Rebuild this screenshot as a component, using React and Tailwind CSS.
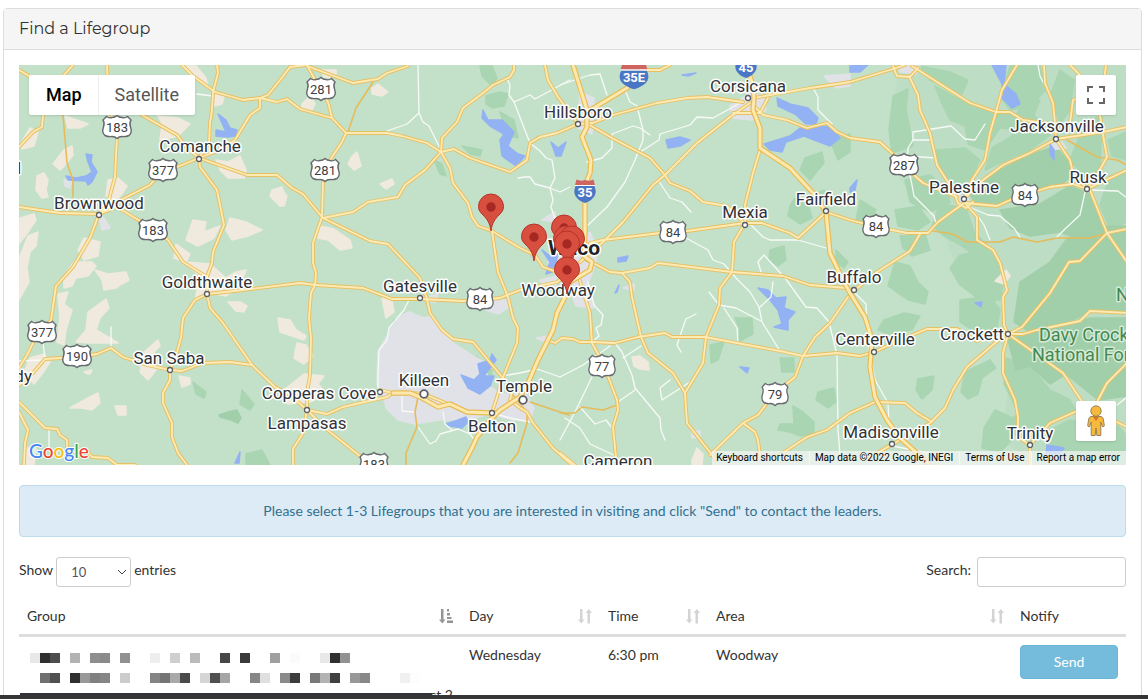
const FOREST_DARK = [
  "M1020 282 L1050 262 1066 240 1092 226 1127 226 1127 310 1090 312 1060 326 1030 332 1014 322Z",
  "M1008 340 L1040 330 1090 318 1127 318 1127 396 1098 400 1066 374 1050 384 1030 366 1016 370Z",
  "M1000 170 L1030 155 1056 146 1076 172 1060 186 1036 190 1020 200 1000 204 976 206 968 190Z",
  "M1040 204 L1070 186 1090 194 1102 228 1080 240 1060 232 1030 236 1010 228 1000 210Z",
  "M219 415 L228 412 237 410 241 418 238 423 231 420 220 417Z",
];

const FOREST = [
  "M893 96 L908 89 906 110 910 130 913 146 892 153 889 130Z",
  "M920 66 L950 72 968 80 962 94 930 80Z",
  "M935 86 L960 100 990 110 1020 114 1018 130 1000 128 985 150 968 144 965 126 950 120 942 104Z",
  "M1010 66 L1040 66 1046 90 1030 106 1010 110 1000 96Z",
  "M1022 95 L1040 100 1034 115 1050 135 1030 150 1000 163 985 170 992 148 1012 136Z",
  "M935 150 L965 148 980 160 970 180 955 186 940 168Z",
  "M905 180 L930 175 948 190 950 203 930 212 910 202Z",
  "M895 210 L918 206 930 222 918 230 898 226Z",
  "M860 200 L876 210 870 222 856 220Z",
  "M900 236 L925 234 930 250 912 256 903 248Z",
  "M940 204 L966 208 974 232 990 248 1000 262 980 260 962 246 944 236 932 226Z",
  "M960 255 L985 250 997 262 1003 285 1000 300 980 300 960 285 950 268Z",
  "M895 262 L910 266 918 282 928 292 925 304 908 300 888 286Z",
  "M884 320 L904 313 920 316 912 330 888 334 878 330Z",
  "M960 300 L990 296 1000 310 996 332 978 334 960 322Z",
  "M965 372 L990 360 996 368 982 378 978 394 968 399 961 392Z",
  "M918 379 L934 376 932 390 922 399 916 390Z",
  "M1006 358 L1030 366 1050 390 1070 400 1076 412 1050 424 1030 444 1006 430 1018 412 1004 384Z",
  "M995 410 L1018 420 1012 440 1000 452 982 448 984 428Z",
  "M1046 432 L1070 420 1118 426 1127 436 1127 465 1060 465Z",
  "M1060 70 L1074 80 1070 110 1060 124 1050 96Z",
  "M1090 120 L1102 116 1100 170 1090 182 1070 160 1078 140Z",
  "M1108 140 L1127 132 1127 160 1112 156Z",
  "M1110 176 L1127 172 1127 222 1110 230 1100 205Z",
  "M795 198 L808 204 812 218 800 224 788 216 790 206Z",
  "M810 196 L824 190 828 204 816 206Z",
  "M805 158 L822 152 824 163 810 180 800 170Z",
  "M830 140 L850 134 850 152 838 160Z",
  "M770 250 L784 246 786 260 778 266 769 260Z",
  "M735 318 L752 318 753 334 738 342 740 330Z",
  "M710 345 L724 342 718 360 711 363Z",
  "M780 358 L794 358 794 372 782 372Z",
  "M793 406 L803 412 814 422 814 434 800 436 790 432 778 430 780 424 794 424Z",
  "M818 392 L834 388 836 402 828 408 816 400Z",
  "M480 66 L492 66 497 78 492 86 482 76Z",
  "M486 96 L500 92 508 94 504 106 492 108 486 104Z",
  "M462 146 L482 150 480 156 470 154Z",
  "M434 160 L442 164 446 176 440 174Z",
  "M500 112 L514 120 518 138 508 136Z",
  "M476 356 L492 370 490 396 480 394 482 376Z",
  "M193 382 L206 392 204 398 196 394Z",
  "M242 390 L254 404 250 410 240 404Z",
  "M246 454 L262 450 270 465 246 465Z",
  "M394 320 L400 324 394 332Z",
  "M836 250 L848 262 844 268 836 262Z",
];

const SAND = [
  "M65 116 L88 124 80 128 68 128Z",
  "M20 145 L30 128 38 132 34 146 22 149Z",
  "M53 164 L64 150 72 146 73 155 66 164 60 170Z",
  "M37 176 L44 173 48 180 46 190 48 197 42 198 36 190Z",
  "M20 218 L34 214 36 220 28 232 19 244Z",
  "M108 180 L118 178 127 186 122 194 116 200 106 196Z",
  "M158 116 L178 118 190 124 178 136 160 140 162 124Z",
  "M182 66 L196 66 206 78 208 88 194 76Z",
  "M214 92 L224 96 222 104 214 106Z",
  "M216 160 L228 162 240 156 246 170 244 178 228 178 220 170Z",
  "M272 190 L282 187 286 200 280 206 270 196Z",
  "M193 220 L206 222 204 232 220 226 214 238 198 246 186 240Z",
  "M230 218 L246 222 262 230 248 236 232 240 226 230Z",
  "M20 256 L28 236 38 232 36 246 30 252 27 268 29 282 19 300Z",
  "M84 238 L100 242 98 256 84 260 78 250Z",
  "M64 276 L74 262 92 262 96 266 88 276 76 278 72 286 64 288Z",
  "M95 270 L108 274 126 272 129 280 122 284 116 288 104 290 102 280Z",
  "M176 244 L190 254 186 262 174 258Z",
  "M195 300 L206 292 226 296 240 286 246 270 236 272 226 278 210 264 184 262 200 276Z",
  "M228 302 L240 302 247 306 244 312 236 311Z",
  "M58 294 L68 292 64 304 72 310 66 330 64 345 57 342 60 318Z",
  "M88 312 L106 299 109 308 100 318 96 330 110 338 118 343 90 343 76 342 86 330Z",
  "M30 358 L44 354 50 362 42 374 34 384 24 372Z",
  "M144 352 L158 340 160 346 152 354 156 370 148 380 140 372Z",
  "M84 372 L92 370 90 374 88 374Z",
  "M179 376 L190 378 190 384 182 387Z",
  "M70 408 L88 398 98 393 100 403 92 410 82 408Z",
  "M115 406 L126 406 126 415 118 415Z",
  "M278 318 L290 320 296 330 306 336 304 340 280 332Z",
  "M297 343 L306 345 313 356 304 364 294 358Z",
  "M280 393 L304 374 324 376 318 384 326 394 310 402 288 404Z",
  "M382 298 L392 300 394 312 386 318Z",
  "M320 226 L334 229 350 240 352 248 340 250 328 240 318 238Z",
  "M352 156 L357 152 361 166 354 170 348 164Z",
  "M380 184 L392 179 394 184 386 189Z",
  "M372 88 L378 84 388 92 382 96 372 94Z",
  "M302 104 L310 96 315 104 312 110 302 108Z",
  "M322 70 L336 70 336 76 324 78Z",
  "M280 188 L287 196 284 206 280 206Z",
  "M632 357 L640 356 648 362 649 370 640 369 634 366Z",
  "M692 460 L697 448 703 454 702 465 692 465Z",
  "M995 281 L1006 270 1010 276 1004 284Z",
  "M24 448 L36 448 34 465 26 465Z",
];

const URBAN = [
  "M401 316 L409 312 424 318 430 316 442 330 453 343 470 354 484 362 490 386 500 394 526 394 534 408 530 420 512 420 490 414 466 420 440 420 415 424 398 420 386 408 384 398 377 384 378 352 390 330Z",
  "M730 106 L752 92 764 98 766 110 752 120 732 118Z",
  "M548 262 L560 256 590 232 596 246 596 262 588 284 594 308 576 306 570 290 556 276Z",
  "M540 280 L556 276 556 288 544 290Z",
  "M580 92 L594 98 592 134 578 128Z",
  "M550 215 L555 212 556 222 542 220Z",
  "M486 300 L506 300 508 308 498 314 486 310Z",
  "M430 296 L438 294 436 302 428 302Z",
  "M954 194 L968 196 970 206 958 206Z",
  "M1048 144 L1062 142 1066 148 1052 150Z",
  "M824 76 L850 74 850 86 836 88Z",
  "M98 212 L104 218 110 228 102 230Z",
  "M64 180 L72 180 70 188 65 186Z",
  "M900 66 L920 66 916 74 900 72Z",
  "M692 431 L700 431 700 438 692 438Z",
  "M623 288 L634 284 634 290Z",
  "M536 338 L548 336 546 342Z",
];

const WATER = [
  "M218 114 L226 120 230 128 237 130 235 136 228 137 216 136 216 130 226 132Z",
  "M86 154 L92 155 91 162 97 172 92 182 88 185 86 181 68 180 66 176 76 178 86 176 92 172 88 162Z",
  "M483 110 L488 120 502 120 514 132 508 146 518 154 525 156 516 166 502 156 500 140 504 134 490 126 482 118Z",
  "M551 142 L558 148 566 142 561 156 556 156Z",
  "M666 140 L680 137 690 140 680 146 668 148Z",
  "M777 98 L790 104 808 108 818 118 816 124 806 124 795 114 778 106Z",
  "M764 144 L790 136 800 128 832 126 840 138 830 146 804 136 786 142 782 152 770 150Z",
  "M992 65 L1006 65 1004 84 1016 94 1020 104 1012 108 1002 98 1002 84Z",
  "M1050 144 L1054 150 1054 160 1050 154Z",
  "M850 188 L857 180 855 190 850 192Z",
  "M850 66 L868 65 860 72 850 72Z",
  "M618 258 L628 256 626 261 618 262Z",
  "M615 293 L619 285 617 292Z",
  "M682 75 L696 73 688 76Z",
  "M758 288 L768 290 776 298 786 297 784 308 795 312 788 320 788 330 774 327 782 324 778 310 770 300Z",
  "M740 367 L749 368 747 373Z",
  "M975 303 L982 302 981 307Z",
  "M461 375 L474 380 480 374 478 364 490 360 492 354 496 360 490 368 484 376 494 376 490 386 480 394 468 388Z",
  "M446 424 L458 420 466 417 468 422 462 428 450 426Z",
  "M542 250 L550 256 558 254 556 262 552 272 546 274 550 262Z",
  "M235 463 L240 452 239 463Z",
  "M1047 445 L1064 448 1060 454 1046 454Z",
];

const ROADS = [
  "M19 70 L29 76",
  "M73 65 L63 76",
  "M107 65 L108 100 117 137 115 177 108 203 99 214 90 238 73 267 56 286 51 320 33 343 27 355 19 368",
  "M43 115 L42 127 33 132 19 147",
  "M182 65 L193 76 215 92 243 100 260 98 277 102 287 99 300 109 332 118 346 133 342 142 330 160 323 183 322 217 313 243 313 263 316 273 315 285 311 293 309 318 311 338 310 375 307 393 307 410 303 433 293 449 293 465",
  "M307 410 L325 428 350 448 361 457",
  "M217 65 L218 73 213 92 212 110 210 123 209 143 199 158",
  "M305 65 L290 67 280 80 268 95 260 98 260 108 250 115 235 140 220 150 199 158",
  "M142 115 L177 135 187 148 199 158 247 175 277 175 292 188 303 194 322 217",
  "M199 158 L200 167 217 190 224 225 213 252 212 263 207 277 207 294",
  "M199 158 L177 167 163 170 150 185 117 202 99 214",
  "M19 207 L60 213 99 214 117 207 135 218 153 228 168 240 183 262 207 277",
  "M207 294 L243 290 300 283 316 285 363 288 392 299 420 299 463 301 480 300 500 298 520 290 557 282 567 275",
  "M207 294 L210 308 223 323 252 365 275 387 290 395 307 410",
  "M207 294 L195 300 183 318 181 338 177 352 170 370 170 380 163 393 163 403 172 423 172 437 178 453 187 465",
  "M170 370 L182 371 203 363 230 362 252 365",
  "M170 370 L147 365 123 357 111 348 97 354 77 357 45 359 33 373 19 385",
  "M19 402 L45 428 57 429 60 435 67 440 67 452 88 452 92 457 108 458 117 465 135 465",
  "M19 412 L28 430 25 443 24 465",
  "M307 65 L315 80 328 102 332 118",
  "M307 66 L353 83 378 79 387 73 408 66",
  "M346 133 L387 133 402 136 427 143 441 152 442 138 457 122 463 108 483 93 493 85 510 77 514 70 514 65",
  "M441 152 L454 149 470 158 510 172 527 160 530 143 540 137 557 133 578 124 593 123 613 115 657 103 687 98 707 97 743 102",
  "M441 152 L425 170 405 185 398 197 368 202 353 212 323 218 370 241 388 244 420 278 427 299 430 313 442 330 453 339 473 342 488 360 502 377",
  "M441 152 L450 168 453 183 468 203 472 217 478 226 492 231 520 248 535 255 543 267 557 272 570 275",
  "M492 231 L498 272 508 297 513 318 518 328 517 343 502 380 497 397 492 413",
  "M545 65 L548 80 558 97 568 110 578 124",
  "M307 410 L327 414 343 407 360 403 387 397 393 393 380 390",
  "M410 393 L424 394 448 404",
  "M513 388 L510 400 520 408 527 412 533 423 553 448 572 465",
  "M548 340 L555 343 562 338 573 339 580 342 592 342 615 343 638 337 665 333 672 337 705 337 737 343 780 351 803 356 837 353 860 356 874 352 905 338 927 329 957 329 977 341 1008 334",
  "M640 70 L660 70 670 65",
  "M750 103 L730 117 697 143 683 157 665 175 653 185 623 222 603 242 580 262",
  "M588 124 L612 138 650 158 665 175 670 183 690 191 703 202 727 206 745 224",
  "M590 243 L603 240 660 233 687 231 745 223 762 223 790 233 798 238 826 212",
  "M754 98 L770 95 810 88 837 84 850 82 893 69 905 65",
  "M753 105 L763 115 787 120 807 128 827 123 837 132 850 138 880 142 892 153 905 167 923 183 957 197",
  "M733 113 L760 113 768 98",
  "M760 150 L753 173 745 205 745 223 734 242 732 272 720 288 719 305 706 337 703 363 685 393 687 423 716 460",
  "M583 258 L597 265 610 272 622 273 650 268 658 263 732 272 783 276 810 285 847 288",
  "M622 273 L630 282 632 297 641 337 648 353 673 373 685 393",
  "M578 275 L590 313 592 343 603 363 617 400 618 410 613 427 616 457",
  "M848 297 L830 323 815 337 803 356 795 377 775 393 758 415 743 423 710 455",
  "M743 423 L755 432 758 440 760 456",
  "M775 458 L807 437 827 430 850 413 875 402 905 403 917 413 932 422",
  "M1008 334 L995 343 967 367 953 390 945 408 930 423 900 440 870 457 850 458",
  "M560 453 L575 465",
  "M826 212 L850 220 877 227 907 233 928 233 938 222 964 203",
  "M920 234 L910 251 877 272 850 294",
  "M893 66 L897 76 910 77 918 68",
  "M912 66 L970 103 996 112 1010 112 1023 120 1050 124",
  "M909 76 L918 95 920 110 930 133 937 165 953 190 958 203 966 208 973 202",
  "M1017 65 L1002 90 996 112 990 133 985 160 972 180 964 199 983 180 1003 165 1030 153 1056 139 1103 132 1127 127",
  "M965 203 L997 206 1017 197 1050 187 1073 184 1087 189 1127 170",
  "M1044 65 L1045 83 1053 103 1055 123 1056 139 1070 160 1073 173 1087 189 1098 173 1107 157 1103 135 1100 115 1106 65",
  "M1070 65 L1080 75",
  "M1070 123 L1073 100 1077 99",
  "M1090 190 L1107 233 1127 262",
  "M1127 229 L1107 233 1080 261 1069 262 1050 293 1022 327 1008 334",
  "M965 203 L977 217 977 240 993 250 1000 263 1007 290 1003 297 1004 325 1008 334 1003 353 1003 373 1015 400 1018 417 1018 437 1030 445 1030 465",
  "M1008 334 L1023 334 1037 330 1080 321 1090 311 1127 313",
  "M1008 334 L1063 373 1083 403",
  "M1127 363 L1107 383 1097 402",
  "M1030 445 L1050 423 1077 411",
  "M1117 422 L1127 427",
];

const MOTORWAYS = [
  "M573 65 L587 110 587 127 582 137 591 160 590 173 586 183 585 203 585 233 584 256 592 262 590 270 570 282 567 293 557 313 553 330 538 360 528 383 520 397 500 410 492 418 477 437 472 448 463 465",
  "M587 112 L627 88 640 77",
  "M393 393 L410 393 420 397 438 407 450 404 467 412 492 413",
  "M746 65 L753 85 754 98 753 110 760 128 760 148 790 168 813 193 826 212 830 253 843 280 850 293 865 317 872 340 870 367 875 397 887 420 900 438 928 463",
];

const SIDE_ROADS = [
  "M63 115 L67 163 73 180 73 197",
  "M373 82 L356 108 348 132",
  "M530 402 L569 415",
  "M527 423 L518 453 510 463",
  "M418 397 L415 412 417 427 406 453 406 465",
  "M560 413 L575 413 582 407 603 410 617 405",
  "M1067 140 L1097 157 1117 160 1127 165",
  "M933 231 L953 234 967 242 1000 242 1013 237 1037 242 1057 238 1090 238 1107 233",
  "M512 394 L527 412 527 423",
];

const LANES = [
  "M197 94 L213 96",
  "M418 65 L419 113 407 124 387 131",
  "M419 113 L423 122 429 126 441 150",
  "M507 79 L510 85 509 95 514 102 530 143 540 151 546 158 552 160 555 178 550 188 553 200 551 207 556 222",
  "M514 102 L530 95 535 99 570 80",
  "M518 178 L525 177 530 177 535 184 550 188 560 192 570 187",
  "M560 85 L590 75 600 74 607 95",
  "M572 65 L580 95",
  "M625 90 L630 102 637 106 643 130 643 140 635 160 625 182 607 207 587 226",
  "M587 162 L602 158 612 148 612 134 633 126 640 128 650 135",
  "M637 154 L659 140 660 134 690 125 697 117 713 118 742 102",
  "M658 180 L670 198 682 202 691 212",
  "M813 88 L818 97 818 110 832 124",
  "M686 238 L708 250 713 260 724 264 736 278 750 292 759 307 762 322 780 351",
  "M750 224 L763 237 770 240 798 240 826 248",
  "M761 272 L758 262 764 255 785 278 806 307 817 308 829 322 837 355 838 430 840 455",
  "M773 282 L771 297 760 307",
  "M709 292 L719 305 736 308 761 321",
  "M724 308 L737 328 738 343",
  "M696 314 L686 319 682 330 677 345 681 352",
  "M588 282 L594 305 603 315 601 325 596 328 599 336 592 342",
  "M615 343 L622 352 632 375 635 388 660 418 661 430 665 440",
  "M560 377 L583 365 610 346",
  "M641 346 L623 358",
  "M592 377 L575 412 560 440",
  "M580 407 L595 424 606 420 612 428",
  "M565 418 L580 428 590 444 616 456",
  "M635 390 L618 402",
  "M690 382 L662 400 660 388 670 380",
  "M410 298 L404 310 389 328 387 340 379 350 378 375 378 388",
  "M402 396 L402 411 414 412",
  "M418 427 L430 444 436 441 440 434 458 429 470 434 473 438",
  "M443 412 L445 424 452 430",
  "M502 376 L520 373 537 369 560 377",
  "M492 413 L510 418 530 422",
  "M111 327 L111 348",
  "M19 361 L45 360 43 342",
  "M49 430 L49 450",
  "M854 292 L866 304 867 340 875 380 888 403 889 425",
  "M936 224 L934 216 914 196 911 180 907 165 908 148 913 140 913 132 951 126 965 139 975 140 985 124",
  "M907 156 L936 158",
  "M913 140 L932 140",
  "M967 206 L988 215 1000 216 1014 228 1020 237",
  "M975 212 L984 225 990 240",
  "M1085 192 L1080 215 1066 228 1056 238",
  "M1090 190 L1118 191 1127 198",
  "M1038 65 L1040 76 1046 88",
  "M1117 405 L1127 397",
  "M893 446 L928 453",
];

const TOWNS = [
  { name: "Comanche", x: 200, y: 152, dot: [199, 159] },
  { name: "Brownwood", x: 99, y: 209, dot: [99, 215] },
  { name: "Goldthwaite", x: 207, y: 288, dot: [207, 294] },
  { name: "San Saba", x: 169, y: 364, dot: [170, 370] },
  { name: "Copperas Cove", x: 319, y: 399, dot: [380, 392] },
  { name: "Lampasas", x: 307, y: 429, dot: [307, 410] },
  { name: "Gatesville", x: 420, y: 292, dot: [420, 298] },
  { name: "Killeen", x: 424, y: 386, dot: [424, 394], big: true },
  { name: "Temple", x: 524, y: 392, dot: [523, 400], big: true },
  { name: "Belton", x: 492, y: 432, dot: [492, 413] },
  { name: "Hillsboro", x: 578, y: 118, dot: [578, 124] },
  { name: "Woodway", x: 558, y: 296 },
  { name: "Cameron", x: 618, y: 467 },
  { name: "Corsicana", x: 748, y: 92, dot: [748, 98] },
  { name: "Mexia", x: 745, y: 218, dot: [745, 225] },
  { name: "Fairfield", x: 826, y: 205, dot: [826, 211] },
  { name: "Buffalo", x: 854, y: 283, dot: [854, 290] },
  { name: "Centerville", x: 875, y: 345, dot: [874, 352] },
  { name: "Madisonville", x: 891, y: 438, dot: [892, 444] },
  { name: "Palestine", x: 964, y: 193, dot: [964, 199] },
  { name: "Jacksonville", x: 1057, y: 132, dot: [1056, 139] },
  { name: "Rusk", x: 1088, y: 183, dot: [1087, 189] },
  { name: "Crockett", x: 972, y: 340, dot: [1008, 334] },
  { name: "Trinity", x: 1030, y: 439, dot: [1030, 445] },
];

const US_ROUTES = [
  ["281", 321, 89],
  ["183", 117, 127],
  ["377", 163, 170],
  ["281", 325, 170],
  ["183", 153, 230],
  ["84", 673, 232],
  ["84", 480, 299],
  ["287", 904, 165],
  ["84", 1025, 195],
  ["84", 876, 226],
  ["377", 42, 332],
  ["190", 77, 356],
  ["77", 602, 366],
  ["79", 775, 394],
  ["183", 374, 464],
];

const PINS = [
  [491, 231],
  [534, 261],
  [564, 252],
  [566, 263],
  [572, 263],
  [567, 268],
  [567, 294],
];

// [x, shade] of each 10px block
const REDACTED_LINES = [
  [
    [3, "#e8e8e8"], [13, "#303030"], [23, "#4d4d4d"], [43, "#b3b3b3"], [63, "#8e8e8e"], [73, "#8a8a8a"],
    [93, "#909090"], [123, "#eeeeee"], [143, "#cfcfcf"], [163, "#bbbbbb"], [193, "#474747"], [213, "#3a3a3a"],
    [243, "#9f9f9f"], [263, "#fbfbfb"], [293, "#e8e8e8"], [303, "#303030"], [313, "#929292"],
  ],
  [
    [13, "#707070"], [23, "#505050"], [43, "#303030"], [53, "#999999"], [63, "#808080"], [73, "#868686"],
    [93, "#cccccc"], [123, "#848484"], [133, "#747474"], [143, "#a9a9a9"], [153, "#4a4a4a"], [173, "#d5d5d5"],
    [183, "#505050"], [193, "#a5a5a5"], [223, "#868686"], [233, "#dfdfdf"], [253, "#8a8a8a"], [263, "#3c3c3c"],
    [273, "#fdfdfd"], [283, "#787878"], [293, "#b3b3b3"], [303, "#404040"], [323, "#989898"], [333, "#888888"],
    [373, "#f0f0f0"], [383, "#fdfdfd"],
  ],
];

function Shapes({ paths, fill }) {
  return (
    <g fill={fill} stroke={fill} strokeWidth="1.5" strokeLinejoin="round">
      {paths.map((d) => (
        <path key={d} d={d} />
      ))}
    </g>
  );
}

function Lines({ paths, color, width }) {
  return (
    <g fill="none" stroke={color} strokeWidth={width} strokeLinejoin="round" strokeLinecap="round">
      {paths.map((d) => (
        <path key={d} d={d} />
      ))}
    </g>
  );
}

function UsShield({ label, x, y }) {
  const wide = label.length > 2;
  return (
    <g transform={`translate(${x} ${y})`}>
      <path
        transform={wide ? undefined : "scale(0.92 1)"}
        d="M-10.5 -10.5 Q-8 -8.5 -5 -9.5 Q-2 -9.5 0 -11.5 Q2 -9.5 5 -9.5 Q8 -8.5 10.5 -10.5 L14 -7 Q12 -4 13.5 0 Q15.5 5.500 12 8.500 Q9 10 5 9.500 Q2 9.500 0 11.500 Q-2 9.500 -5 9.500 Q-9 10 -12 8.500 Q-15.500 5.500 -13.500 0 Q-12 -4 -14 -7Z"
        fill="#fff"
        stroke="#666a6e"
        strokeWidth="1.4"
      />
      <text y="5" textAnchor="middle" className="text-[13px]" fill="#3c4043">
        {label}
      </text>
    </g>
  );
}

function InterstateShield({ label, x, y, wide }) {
  return (
    <g transform={`translate(${x} ${y})`}>
      <g transform={wide ? "scale(1.35 1.1)" : undefined}>
        <path d="M-9.500 -5 Q-11.500 0 -10 4 Q-8 9 0 12 Q8 9 10 4 Q11.500 0 9.500 -5Z" fill="#4a76c5" />
        <path d="M-8.500 -11.500 Q-5 -9.500 0 -11 Q5 -9.500 8.500 -11.500 L10 -6 H-10Z" fill="#cf6460" />
        <path d="M-10 -5.500 H10" stroke="#fff" strokeWidth="1" />
      </g>
      <text y="6" textAnchor="middle" className="text-[13px] font-bold" fill="#fff">
        {label}
      </text>
    </g>
  );
}

function Pin({ x, y }) {
  return (
    <g transform={`translate(${x} ${y})`}>
      <path
        d="M0 0 C-1 -8 -4 -12 -8 -16 C-11 -19 -12.500 -21 -12.500 -24.500 A12.500 12.500 0 0 1 12.500 -24.500 C12.500 -21 11 -19 8 -16 C4 -12 1 -8 0 0Z"
        fill="#d84f40"
        stroke="#b5332a"
        strokeWidth="1"
      />
      <circle cy="-24" r="4.700" fill="#a52822" />
    </g>
  );
}

function MapDrawing() {
  return (
    <svg
      viewBox="19 65 1107 400"
      preserveAspectRatio="xMidYMid slice"
      className="block w-full h-full font-[Roboto,sans-serif]"
      role="img"
      aria-label="Map of Lifegroup locations"
    >
      <rect x="19" y="65" width="1108" height="400" fill="#c3e1c9" />
      <path
        d="M900 65 L1127 65 1127 465 1040 465 1000 440 1010 380 1000 330 960 280 940 220 900 180 890 120Z"
        fill="#b8dcbf"
        opacity="0.5"
      />
      <Shapes paths={FOREST} fill="#a9d5b2" />
      <Shapes paths={FOREST_DARK} fill="#a1cfaa" />
      <Shapes paths={SAND} fill="#f0eade" />
      <Shapes paths={URBAN} fill="#e0e2e7" />
      <Shapes paths={WATER} fill="#92b2f3" />
      <Lines paths={LANES} color="#f7faf7" width="1.3" />
      <Lines paths={SIDE_ROADS} color="#e6bb5a" width="1.6" />
      <Lines paths={ROADS} color="#e8c064" width="3.8" />
      <Lines paths={ROADS} color="#fdebb6" width="1.8" />
      <Lines paths={MOTORWAYS} color="#e8bb55" width="5.4" />
      <Lines paths={MOTORWAYS} color="#fde9ae" width="3" />

      {US_ROUTES.map(([label, x, y]) => (
        <UsShield key={`${label}-${x}`} label={label} x={x} y={y} />
      ))}
      <InterstateShield label="35E" x={634} y={76} wide />
      <InterstateShield label="45" x={746} y={66} />
      <InterstateShield label="35" x={585} y={191} />

      {TOWNS.filter((t) => t.dot).map((t) => (
        <circle
          key={t.name}
          cx={t.dot[0]}
          cy={t.dot[1]}
          r={t.big ? 3.8 : 2.5}
          fill="#fff"
          stroke="#5b5f63"
          strokeWidth={t.big ? 1.8 : 1.3}
        />
      ))}

      <g stroke="#fff" strokeWidth="3" strokeLinejoin="round" paintOrder="stroke" fill="#2f3337">
        <g textAnchor="middle" className="text-[17px]">
          {TOWNS.map((t) => (
            <text key={t.name} x={t.x} y={t.y}>
              {t.name}
            </text>
          ))}
        </g>
        <text x="574" y="255" textAnchor="middle" className="text-[21px] font-bold" fill="#1f2225">
          Waco
        </text>
        <text x="32" y="382" textAnchor="end" className="text-[17px]">
          dy
        </text>
        <text x="21" y="174" textAnchor="end" className="text-[17px]">
          d
        </text>
        <g className="text-[18px]" fill="#43894f" stroke="#d5ead9">
          <text x="1039" y="341">Davy Crockett</text>
          <text x="1032" y="361">National Forest</text>
          <text x="1116" y="301">N</text>
        </g>
      </g>

      {PINS.map(([x, y]) => (
        <Pin key={`${x}-${y}`} x={x} y={y} />
      ))}
    </svg>
  );
}

function GoogleLogo() {
  return (
    <a
      href="#google"
      aria-label="Google"
      className="absolute bottom-0.5 left-2.5 font-[Lato,sans-serif] text-[19px] leading-6 font-medium [-webkit-text-stroke:2px_white] [paint-order:stroke_fill]"
    >
      <span className="text-[#4285f4]">G</span>
      <span className="text-[#ea4335]">o</span>
      <span className="text-[#fbbc04]">o</span>
      <span className="text-[#4285f4]">g</span>
      <span className="text-[#34a853]">l</span>
      <span className="text-[#ea4335]">e</span>
    </a>
  );
}

function Pegman() {
  return (
    <svg viewBox="0 0 18 32" className="h-8 w-[18px]" aria-hidden="true">
      <g fill="#f6b93b" stroke="#8c7a55" strokeWidth="0.9" strokeLinejoin="round">
        <path d="M4 11.500 H14 Q16 12 16.300 14 L17.300 20.500 Q17.300 22 15.500 21.800 L13.800 17 V30.500 H9.800 L9 23 8.200 30.500 H4.200 V17 L2.500 21.800 Q0.700 22 0.700 20.500 L1.700 14 Q2 12 4 11.500Z" />
        <circle cx="9" cy="6" r="5.200" />
      </g>
      <path d="M6 11.800 H12 L9 16Z" fill="#d9752b" />
    </svg>
  );
}

function LocationMap() {
  return (
    <div className="relative h-[400px] overflow-hidden font-[Roboto,sans-serif]">
      <MapDrawing />

      <div className="absolute top-2.5 left-2.5 flex h-10 rounded-xs bg-white text-lg shadow">
        <button type="button" className="pr-4 pl-[17px] font-medium text-black">
          Map
        </button>
        <button type="button" className="border-l border-[#eeeeee] px-4 text-[#565656]">
          Satellite
        </button>
      </div>

      <button
        type="button"
        aria-label="Toggle fullscreen view"
        className="absolute top-2.5 right-2.5 flex size-10 items-center justify-center rounded-xs bg-white shadow"
      >
        <svg viewBox="0 0 18 18" className="size-[18px]" fill="#666">
          <path d="M0 0v6h2V2h4V0H0zm16 0h-4v2h4v4h2V0h-2zm0 16h-4v2h6v-6h-2v4zM2 12H0v6h6v-2H2v-4z" />
        </svg>
      </button>

      <button
        type="button"
        aria-label="Street View"
        className="absolute right-2.5 bottom-6 flex size-10 items-center justify-center rounded-xs bg-white shadow"
      >
        <Pegman />
      </button>

      <GoogleLogo />

      <div className="absolute right-0 bottom-0 flex h-3.5 items-center bg-[#f5f5f5]/70 text-[10px] leading-[14px] text-black">
        <button type="button" className="pr-1.5 pl-1">Keyboard shortcuts</button>
        <span className="border-l border-white/60 pr-1.5 pl-[5px]">Map data ©2022 Google, INEGI</span>
        <a href="#terms" className="border-l border-white/60 pr-1.5 pl-[5px]">Terms of Use</a>
        <a href="#report" className="border-l border-white/60 pr-1.5 pl-[5px]">Report a map error</a>
      </div>
    </div>
  );
}

function SortIcon({ active }) {
  if (active) {
    return (
      <svg viewBox="0 0 14 15" className="h-[15px] w-3.5 shrink-0" fill="#959595" aria-hidden="true">
        <path d="M2 0h2.500v10.500h2L3.250 14.500 0 10.500h2z" />
        <path d="M8 0h2v2.500H8zM8 4h3v2.500H8zM8 8h4.500v2H8zM8 11.500h6v2.500H8z" />
      </svg>
    );
  }
  return (
    <svg viewBox="0 0 14 15" className="h-[15px] w-3.5 shrink-0" fill="#d4d4d4" aria-hidden="true">
      <path d="M2 0h2.500v10.500h2L3.250 14.500 0 10.500h2z" />
      <path d="M9.500 14.500h2.500V4h2L10.750 0 7.500 4h2z" />
    </svg>
  );
}

function HeaderCell({ children, width = "", sort }) {
  return (
    <th scope="col" className={`px-2 pb-2 text-left font-normal ${width}`}>
      <div className="flex items-center justify-between">
        {children}
        {sort && <SortIcon active={sort === "asc"} />}
      </div>
    </th>
  );
}

function RedactedName() {
  return (
    <svg viewBox="0 0 400 40" className="mt-[3px] -mb-[3px] block h-10 w-[400px]" aria-hidden="true">
      {REDACTED_LINES.map((line, row) =>
        line.map(([x, shade]) => (
          <rect key={`${row}-${x}`} x={x} y={5 + row * 20} width="10" height="10" fill={shade} />
        ))
      )}
    </svg>
  );
}

export default function App() {
  return (
    <div className="flex h-screen flex-col overflow-hidden bg-white font-[Lato,sans-serif] text-sm leading-5 text-[#333]">
      <main className="min-h-0 flex-1 overflow-hidden pt-2 pr-1.5 pl-[3px]">
        <section className="rounded-t border border-[#dddddd]">
          <h1 className="border-b border-[#dddddd] bg-[#f5f5f5] px-[15px] py-2.5 font-[Montserrat,Inter,sans-serif] text-base leading-5">
            Find a Lifegroup
          </h1>

          <div className="p-[15px]">
            <LocationMap />

            <p className="mt-5 rounded border border-[#bcdcec] bg-[#ddebf6] p-[15px] text-center text-[#31708f]">
              Please select 1-3 Lifegroups that you are interested in visiting and click "Send" to contact the leaders.
            </p>

            <div className="mt-5 flex items-start justify-between">
              <label className="flex items-start gap-[3px]">
                <span className="pt-[3px]">Show</span>
                <span className="relative">
                  <select className="h-[30px] w-[75px] appearance-none rounded-[3px] border border-[#cccccc] bg-white pl-3.5 text-[13px] text-[#555]">
                    <option>10</option>
                    <option>25</option>
                    <option>50</option>
                    <option>100</option>
                  </select>
                  <svg
                    viewBox="0 0 10 6"
                    className="pointer-events-none absolute top-3 right-1 h-1.5 w-2.5"
                    fill="none"
                    stroke="#444"
                  >
                    <path d="M1 1 L5 5 9 1" />
                  </svg>
                </span>
                <span className="pt-[3px]">entries</span>
              </label>

              <label className="flex items-start gap-1.5">
                <span className="pt-[3px]">Search:</span>
                <input type="search" className="h-[30px] w-[149px] rounded-[3px] border border-[#cccccc] px-2.5 text-[13px]" />
              </label>
            </div>

            <table className="mt-[19px] w-full table-fixed border-collapse">
              <thead>
                <tr className="border-b-3 border-[#dddddd]">
                  <HeaderCell sort="asc">Group</HeaderCell>
                  <HeaderCell width="w-[139px]" sort="none">Day</HeaderCell>
                  <HeaderCell width="w-[108px]" sort="none">Time</HeaderCell>
                  <HeaderCell width="w-[304px]" sort="none">Area</HeaderCell>
                  <HeaderCell width="w-[114px]">Notify</HeaderCell>
                </tr>
              </thead>
              <tbody>
                <tr className="align-top">
                  <td className="px-2 pt-2">
                    <RedactedName />
                    <div className="text-right">ct 2</div>
                  </td>
                  <td className="px-2 pt-2">Wednesday</td>
                  <td className="px-2 pt-2">6:30 pm</td>
                  <td className="px-2 pt-2">Woodway</td>
                  <td className="px-2 pt-2">
                    <button
                      type="button"
                      className="h-[34px] w-full rounded border border-[#6bb5d8] bg-[#75bbdc] text-white"
                    >
                      Send
                    </button>
                  </td>
                </tr>
              </tbody>
            </table>
          </div>
        </section>
      </main>

      {/* Browser window edge */}
      <footer className="relative h-1 shrink-0 bg-[#343638]">
        <div className="absolute bottom-full left-5 h-0.5 w-[412px] bg-[#323438]" />
      </footer>
    </div>
  );
}
